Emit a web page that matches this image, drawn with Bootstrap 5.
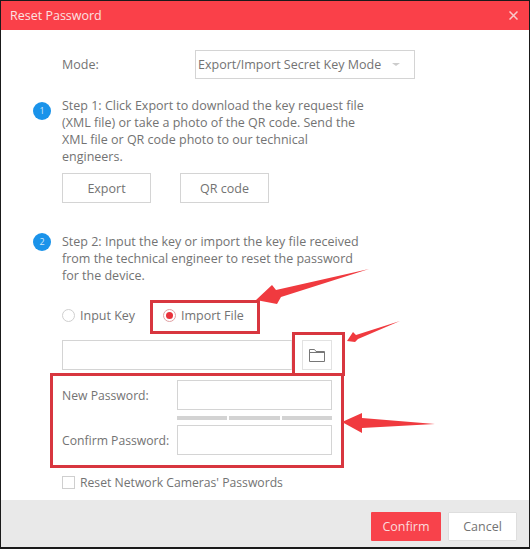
<!DOCTYPE html>
<html lang="en">
<head>
<meta charset="utf-8">
<title>Reset Password</title>
<link href="https://cdn.jsdelivr.net/npm/bootstrap@5.3.0/dist/css/bootstrap.min.css" rel="stylesheet">
<style>
html,body{margin:0;height:549px;width:530px;overflow:hidden;background:#fff}
body{font-family:"Open Sans","Noto Sans","Liberation Sans",sans-serif;font-size:12.5px;color:#737373;line-height:17px}
.dlg{position:relative;width:530px;height:549px;border:1px solid #1a1a1a;border-bottom-width:2px;border-top-width:1px;display:flex;flex-direction:column;background:#fff}
.dlg-head{height:29px;background:#fa4049;color:#fbe3e3;padding:0 9px;flex:none}
.dlg-x{width:9px;height:9px;margin-right:2px}
.dlg-body{flex:1;padding:0 0 0 61px;position:relative}
.mode-row{height:29px;margin-top:20px}
.mode-label{width:133px}
.mode-sel{width:220px;height:29px;border:1px solid #d4d4d4;padding:0 14px 0 2px}
.caret-d{width:0;height:0;border-left:4px solid transparent;border-right:4px solid transparent;border-top:3px solid #ccc}
.step{position:relative;width:304px}
.step-1{margin-top:18px}
.step-2{margin-top:30px}
.dot{position:absolute;left:-29px;width:18px;height:18px;border-radius:50%;background:#1a93ea;color:#cfe9fb;font-size:9px;line-height:18px;text-align:center}
.step-1 .dot{top:5px}
.step-2 .dot{top:0}
.b-row{margin-top:8px;gap:29px}
.hbtn{width:89px;height:30px;border:1px solid #d4d4d4;background:#fff;color:#737373;display:flex;align-items:center;justify-content:center}
.radio-row{margin-top:23px;height:17px}
.rd{width:13px;height:13px;border-radius:50%;border:1px solid #cfcfcf;background:#fff;flex:none;margin-right:5px}
.rd-on{border-color:#e0a0a3;display:flex;align-items:center;justify-content:center}
.rd-on::after{content:"";width:7px;height:7px;border-radius:50%;background:#e8323c}
.radio-a{width:101px}
.file-row{margin-top:16px;height:30px;gap:10px}
.file-in{width:230px;height:30px;border:1px solid #d4d4d4;border-right-color:#eee}
.file-btn{width:30px;height:30px;border:1px solid #e2e2e2;background:#fff;display:flex;align-items:center;justify-content:center}
.pw-row{height:30px;margin-top:10px}
.pw-label{width:115px;font-size:12.2px}
.pw-in{width:155px;height:30px;border:1px solid #d4d4d4}
.meter{margin:6px 0 0 115px;width:155px;gap:2px;height:4px}
.meter i{flex:1;background:#d3d3d3}
.pw-row-2{margin-top:5px}
.chk-row{margin-top:19px;height:17px;font-size:12.2px}
.chk{width:13px;height:13px;border:1px solid #cfcfcf;margin-right:5px;flex:none}
.dlg-foot{height:47px;background:#e9e9e9;padding:6px 12px 0 0;gap:7px;flex:none}
.fbtn{height:29px;display:flex;align-items:center;justify-content:center;border-radius:1px}
.fbtn-red{width:70px;background:#f8424b;color:#fbdcdc}
.fbtn-w{width:69px;background:#fff;color:#737373;border:1px solid #dedede}
.mark-box{position:absolute;border:3px solid #d8363f;pointer-events:none}
.mb-a{left:149px;top:299px;width:110px;height:34px}
.mb-b{left:291px;top:331px;width:53px;height:44px}
.mb-c{left:49px;top:372px;width:294px;height:95px}
.arrows{position:absolute;left:-1px;top:-1px;width:530px;height:549px;pointer-events:none}
</style>
</head>
<body>
<div class="dlg">
  <div class="dlg-head d-flex align-items-center justify-content-between">
    <span>Reset Password</span>
    <svg class="dlg-x" viewBox="0 0 9 9"><path d="M.5.5l8 8M8.5.5l-8 8" stroke="#f8c9cb" stroke-width="1.5" fill="none"/></svg>
  </div>
  <div class="dlg-body">
    <div class="mode-row d-flex align-items-center">
      <div class="mode-label">Mode:</div>
      <div class="mode-sel d-flex align-items-center justify-content-between"><span>Export/Import Secret Key Mode</span><span class="caret-d"></span></div>
    </div>
    <div class="step step-1">
      <span class="dot">1</span>
      Step 1: Click Export to download the key request file (XML file) or take a photo of the QR code. Send the XML file or QR code photo to our technical engineers.
    </div>
    <div class="d-flex b-row">
      <div class="hbtn">Export</div>
      <div class="hbtn">QR code</div>
    </div>
    <div class="step step-2">
      <span class="dot">2</span>
      Step 2: Input the key or import the key file received from the technical engineer to reset the password for the device.
    </div>
    <div class="radio-row d-flex align-items-center">
      <div class="radio-a d-flex align-items-center"><span class="rd"></span>Input Key</div>
      <div class="d-flex align-items-center"><span class="rd rd-on"></span>Import File</div>
    </div>
    <div class="file-row d-flex">
      <div class="file-in"></div>
      <div class="file-btn">
        <svg width="16" height="13" viewBox="0 0 16 13"><path d="M.5 12.5V.5h5l1.500 2h8.500v10zM.5 3.500h15" fill="none" stroke="#777" stroke-width="1"/></svg>
      </div>
    </div>
    <div class="pw-row d-flex align-items-center">
      <div class="pw-label">New Password:</div>
      <div class="pw-in"></div>
    </div>
    <div class="meter d-flex"><i></i><i></i><i></i></div>
    <div class="pw-row pw-row-2 d-flex align-items-center">
      <div class="pw-label">Confirm Password:</div>
      <div class="pw-in"></div>
    </div>
    <div class="chk-row d-flex align-items-center"><span class="chk"></span>Reset Network Cameras' Passwords</div>
  </div>
  <div class="dlg-foot d-flex align-items-center justify-content-end">
    <div class="fbtn fbtn-red">Confirm</div>
    <div class="fbtn fbtn-w">Cancel</div>
  </div>
  <div class="mark-box mb-a"></div>
  <div class="mark-box mb-b"></div>
  <div class="mark-box mb-c"></div>
  <svg class="arrows" viewBox="0 0 530 549">
    <path fill="#f03a3f" d="M256 300 272 285 276 290 369 269 281 297 277 304Z"/>
    <path fill="#f03a3f" d="M347 341 353 332 356 335 400 321 358 339 355 342Z"/>
    <path fill="#f03a3f" d="M342 422 362 413 362 418 435 424 362 428 362 433Z"/>
  </svg>
</div>
<script src="https://cdn.jsdelivr.net/npm/bootstrap@5.3.0/dist/js/bootstrap.bundle.min.js"></script>
</body>
</html>
